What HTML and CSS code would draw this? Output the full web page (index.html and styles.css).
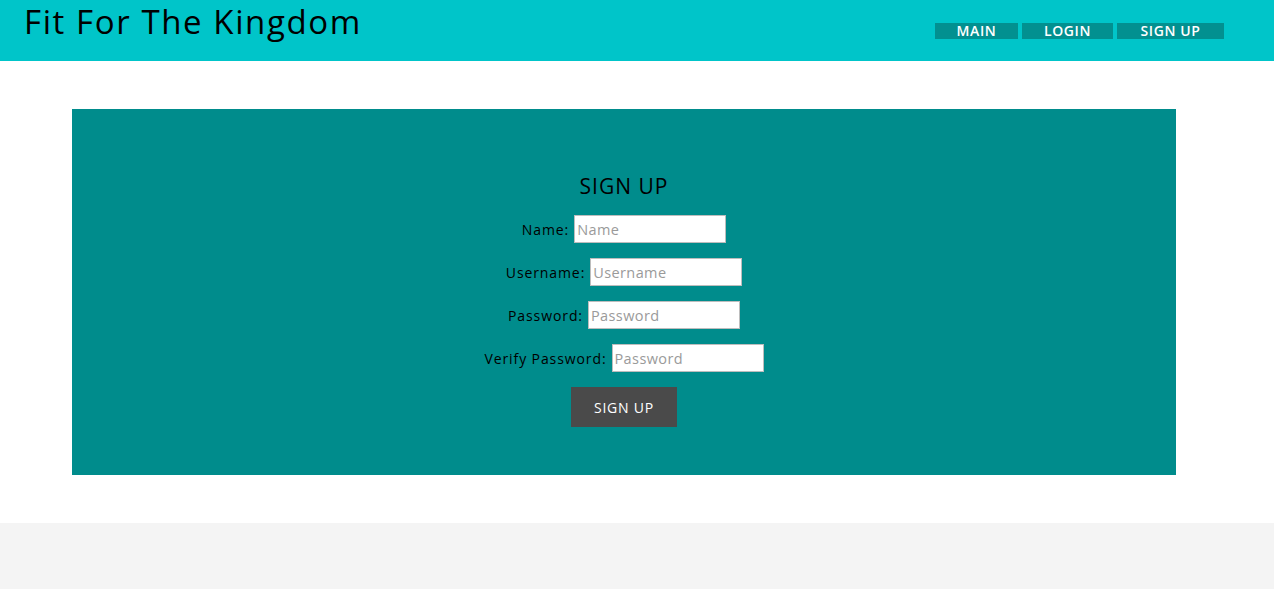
FILE: index.html
```html
<!DOCTYPE html>
<html>
<head>
<meta charset="utf-8">
<link rel="stylesheet" href="styles.css">
</head>
<body>
<header class="topbar">
  <h1 class="brand">Fit For The Kingdom</h1>
  <nav class="nav">
    <a class="nav-btn nav-main">MAIN</a>
    <a class="nav-btn nav-login">LOGIN</a>
    <a class="nav-btn nav-signup">SIGN UP</a>
  </nav>
</header>
<main class="content">
  <section class="panel">
    <h2 class="panel-title">SIGN UP</h2>
    <form class="form">
      <div class="row"><label>Name:</label><input type="text" placeholder="Name"></div>
      <div class="row"><label>Username:</label><input type="text" placeholder="Username"></div>
      <div class="row"><label>Password:</label><input type="password" placeholder="Password"></div>
      <div class="row"><label>Verify Password:</label><input type="password" placeholder="Password"></div>
      <div class="row"><button type="button" class="submit">SIGN UP</button></div>
    </form>
  </section>
</main>
<footer class="footer"></footer>
</body>
</html>
```
FILE: styles.css
```css
* { box-sizing: border-box; }
html, body { margin: 0; padding: 0; }
body {
  font-family: "Open Sans", "Liberation Sans", sans-serif;
  background: #ffffff;
  color: #000;
}
.topbar {
  height: 61px;
  background: #00c5c9;
  display: flex;
  justify-content: space-between;
  align-items: flex-start;
  padding: 0 50px 0 24px;
}
.brand {
  margin: 0;
  font-weight: 400;
  font-size: 33px;
  line-height: 44px;
  letter-spacing: 1.6px;
}
.nav {
  display: flex;
  gap: 5px;
  margin-top: 23px;
}
.nav-btn {
  height: 16px;
  background: #029090;
  color: #fff;
  font-size: 14px;
  font-weight: 600;
  line-height: 16px;
  text-align: center;
  letter-spacing: 0.6px;
}
.nav-main { width: 83px; }
.nav-login { width: 91px; margin-left: -1px; }
.nav-signup { width: 107px; margin-left: -1px; }
.content {
  padding: 48px 98px 48px 72px;
}
.panel {
  background: #008c8c;
  height: 366px;
  padding-top: 64px;
  text-align: center;
}
.panel-title {
  margin: 0 0 16px;
  font-weight: 400;
  font-size: 21px;
  line-height: 26px;
  letter-spacing: 1px;
}
.form {
  display: flex;
  flex-direction: column;
  align-items: center;
  gap: 15px;
}
.row {
  display: flex;
  align-items: center;
  justify-content: center;
  height: 28px;
}
.row label {
  font-size: 14px;
  letter-spacing: 0.9px;
  margin-right: 5px;
}
.row input {
  width: 152px;
  height: 28px;
  border: 1px solid #bdbdbd;
  background: #fff;
  font-family: inherit;
  font-size: 14.5px;
  padding: 0 2px;
  letter-spacing: 0.4px;
}
.row input::placeholder { color: #9a9a9a; }
.row:last-child { height: 40px; }
.submit {
  width: 106px;
  height: 40px;
  background: #4a4a4a;
  color: #fff;
  border: none;
  font-family: inherit;
  font-size: 14px;
  letter-spacing: 0.8px;
}
.footer {
  height: 66px;
  background: #f4f4f4;
}
```
